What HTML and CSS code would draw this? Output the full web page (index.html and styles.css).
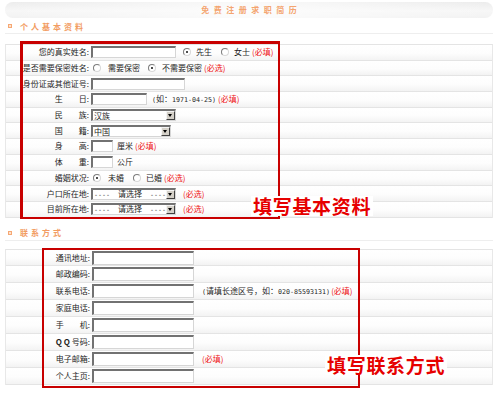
FILE: index.html
```html
<!DOCTYPE html>
<html lang="zh-CN">
<head>
<meta charset="utf-8">
<title>免费注册求职简历</title>
<link rel="stylesheet" href="styles.css">
</head>
<body>
<div class="page">
  <div class="titlebar">免费注册求职简历</div>

  <div class="sec-head"><span class="sq"></span>个人基本资料</div>
  <div class="tbl t1">
    <div class="row"><div class="lbl">您的真实姓名:</div><div class="val"><input class="inp w85" type="text"><span class="rad on ml7"></span><span class="ml5">先生</span><span class="rad ml9"></span><span class="ml5">女士</span><span class="req ml2">(必填)</span></div></div>
    <div class="row"><div class="lbl">是否需要保密姓名:</div><div class="val"><span class="rad ml2"></span><span class="ml7">需要保密</span><span class="rad on ml8"></span><span class="ml6">不需要保密</span><span class="req ml2">(必选)</span></div></div>
    <div class="row"><div class="lbl">身份证或其他证号:</div><div class="val"><input class="inp w94" type="text"></div></div>
    <div class="row"><div class="lbl">生　　日:</div><div class="val"><input class="inp w56" type="text"><span class="ml5"><span class="m">(</span>如：<span class="m">1971-04-25)</span></span><span class="req ml2">(必填)</span></div></div>
    <div class="row"><div class="lbl">民　　族:</div><div class="val"><span class="sel w85"><span class="st">汉族</span><span class="sb"></span></span></div></div>
    <div class="row"><div class="lbl">国　　籍:</div><div class="val"><span class="sel w80"><span class="st">中国</span><span class="sb"></span></span></div></div>
    <div class="row"><div class="lbl">身　　高:</div><div class="val"><input class="inp w22" type="text"><span class="ml4">厘米</span><span class="req ml2">(必填)</span></div></div>
    <div class="row"><div class="lbl">体　　重:</div><div class="val"><input class="inp w22" type="text"><span class="ml4">公斤</span></div></div>
    <div class="row"><div class="lbl">婚姻状况:</div><div class="val"><span class="rad on ml2"></span><span class="ml7">未婚</span><span class="rad ml9"></span><span class="ml5">已婚</span><span class="req ml2">(必选)</span></div></div>
    <div class="row"><div class="lbl">户口所在地:</div><div class="val"><span class="sel w85"><span class="st"><span class="m">----&nbsp;&nbsp;</span>请选择<span class="m">&nbsp;&nbsp;----</span></span><span class="sb"></span></span><span class="req ml7">(必选)</span></div></div>
    <div class="row"><div class="lbl">目前所在地:</div><div class="val"><span class="sel w85"><span class="st"><span class="m">----&nbsp;&nbsp;</span>请选择<span class="m">&nbsp;&nbsp;----</span></span><span class="sb"></span></span><span class="req ml7">(必选)</span></div></div>
  </div>

  <div class="sec-head sec2"><span class="sq"></span>联系方式</div>
  <div class="tbl t2">
    <div class="row"><div class="lbl">通讯地址:</div><div class="val"><input class="inp" type="text"></div></div>
    <div class="row"><div class="lbl">邮政编码:</div><div class="val"><input class="inp" type="text"></div></div>
    <div class="row"><div class="lbl">联系电话:</div><div class="val"><input class="inp" type="text"><span class="ml8"><span class="m">(</span>请填长途区号，如：<span class="m">020-85593131)</span></span><span class="req ml1">(必填)</span></div></div>
    <div class="row"><div class="lbl">家庭电话:</div><div class="val"><input class="inp" type="text"></div></div>
    <div class="row"><div class="lbl">手　　机:</div><div class="val"><input class="inp" type="text"></div></div>
    <div class="row"><div class="lbl"><b>Q Q</b> 号码:</div><div class="val"><input class="inp" type="text"></div></div>
    <div class="row"><div class="lbl">电子邮箱:</div><div class="val"><input class="inp" type="text"><span class="req ml8">(必填)</span></div></div>
    <div class="row"><div class="lbl">个人主页:</div><div class="val"><input class="inp" type="text"></div></div>
  </div>

  <div class="callout box1"></div>
  <div class="callout box2"></div>
  <div class="tag tag1">填写基本资料</div>
  <div class="tag tag2">填写联系方式</div>
</div>
</body>
</html>
```
FILE: styles.css
```css
html, body {
  margin: 0;
  padding: 0;
  background: #fff;
}
body {
  width: 500px;
  height: 394px;
  overflow: hidden;
  font-family: "Noto Sans CJK SC", "Noto Sans", sans-serif;
  font-size: 8px;
  color: #1e1e1e;
}
.page {
  position: relative;
  padding: 2px 7px 0 5px;
}
.titlebar {
  height: 16px;
  border-radius: 8px;
  background: linear-gradient(to right, rgba(255,255,255,0) 0%, rgba(255,255,255,0.7) 50%, rgba(255,255,255,0) 100%),
              linear-gradient(to bottom, #ececec 0%, #f7f7f7 55%, #f2f2f2 100%);
  text-align: center;
  line-height: 16px;
  font-weight: bold;
  color: #f4a46f;
  letter-spacing: 4.5px;
  padding-left: 4.5px;
}
.sec-head {
  margin-top: 1px;
  height: 15px;
  box-sizing: border-box;
  border-bottom: 1px solid #eeeeee;
  display: flex;
  align-items: center;
  padding-left: 3px;
  font-weight: bold;
  color: #f29c62;
  letter-spacing: 3px;
}
.sec2 { margin-top: 8px; }
.sq {
  width: 4px;
  height: 4px;
  box-sizing: border-box;
  border: 1px solid #f6a874;
  background: #fde2cc;
  margin-right: 8px;
  flex: none;
}
.tbl {
  border-top: 1px solid #e4e4e4;
  border-left: 1px solid #e8e8e8;
  border-right: 1px solid #e8e8e8;
}
.t1 { margin-top: 10px; }
.t2 { margin-top: 8px; }
.row {
  display: flex;
  align-items: center;
  box-sizing: border-box;
  border-bottom: 1px solid #e4e4e4;
  background: linear-gradient(to bottom, #ffffff 0%, #fdfdfd 55%, #f3f3f3 100%);
  white-space: nowrap;
}
.t1 .row { height: 15.7px; }
.t2 .row { height: 16.9px; }
.lbl {
  width: 83px;
  flex: none;
  text-align: right;
  line-height: 10px;
}
.t2 .lbl { width: 84px; }
.val {
  display: flex;
  align-items: center;
  padding-left: 2px;
  line-height: 10px;
}
.inp {
  display: block;
  box-sizing: border-box;
  margin: 0;
  padding: 0;
  height: 12px;
  border-style: solid;
  border-width: 2px 1px 1px 2px;
  border-color: #727272 #d6d6d6 #d6d6d6 #727272;
  background: #fff;
  font-size: 8px;
  outline: none;
  flex: none;
}
.t2 .inp { height: 14px; width: 102px; }
.w22 { width: 22px; }
.w56 { width: 56px; }
.w80 { width: 80px; }
.w85 { width: 85px; }
.w94 { width: 94px; }
.ml1 { margin-left: 1px; }
.ml2 { margin-left: 2px; }
.ml4 { margin-left: 4px; }
.ml5 { margin-left: 5px; }
.ml6 { margin-left: 6px; }
.ml7 { margin-left: 7px; }
.ml8 { margin-left: 8px; }
.ml9 { margin-left: 9px; }
.req { color: #ee1111; }
.m {
  font-family: "DejaVu Sans Mono", "Liberation Mono", monospace;
  font-size: 6.67px;
}
.rad {
  position: relative;
  display: block;
  flex: none;
  width: 8px;
  height: 8px;
  box-sizing: border-box;
  border-radius: 50%;
  border: 1px solid;
  border-color: #7c7c7c #d8d8d8 #d8d8d8 #7c7c7c;
  background: #fff;
}
.rad.on::after {
  content: "";
  position: absolute;
  left: 2px;
  top: 2px;
  width: 2px;
  height: 2px;
  border-radius: 50%;
  background: #111;
}
.sel {
  display: flex;
  align-items: center;
  flex: none;
  box-sizing: border-box;
  height: 12px;
  border-style: solid;
  border-width: 2px 1px 1px 2px;
  border-color: #727272 #d6d6d6 #d6d6d6 #727272;
  background: #fff;
  overflow: hidden;
}
.st {
  flex: 1;
  min-width: 0;
  overflow: hidden;
  padding-left: 1px;
  line-height: 9px;
}
.sb {
  position: relative;
  flex: none;
  width: 9px;
  height: 9px;
  box-sizing: border-box;
  background: #d4d0c8;
  border: 1px solid;
  border-color: #f4f4f4 #404040 #404040 #f4f4f4;
}
.sb::after {
  content: "";
  position: absolute;
  left: 1px;
  top: 2px;
  border-left: 2.5px solid transparent;
  border-right: 2.5px solid transparent;
  border-top: 3px solid #000;
}
.callout {
  position: absolute;
  box-sizing: border-box;
  border: 2px solid #c80000;
}
.box1 {
  left: 20px;
  top: 41px;
  width: 260px;
  height: 178px;
  border-width: 3px 2px 2px 3px;
}
.box2 {
  left: 42px;
  top: 248px;
  width: 318px;
  height: 140px;
}
.tag {
  position: absolute;
  font-size: 19px;
  font-weight: bold;
  line-height: 20px;
  letter-spacing: 0.7px;
  color: #e60000;
  background: #fff;
  padding: 0 2px;
}
.tag1 { left: 251px; top: 196px; }
.tag2 { left: 325px; top: 355px; }
```
